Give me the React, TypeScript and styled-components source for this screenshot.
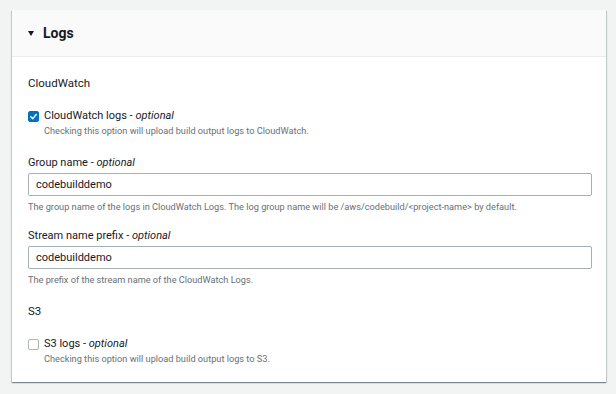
import React from 'react';
import styled, { createGlobalStyle } from 'styled-components';

const GlobalStyle = createGlobalStyle`
  html, body {
    margin: 0;
    padding: 0;
    background: #f2f3f3;
  }
  body {
    font-family: Roboto, "Liberation Sans", Arial, sans-serif;
    color: #16191f;
  }
`;

const Page = styled.div`
  padding: 10px 10px 12px 12px;
`;

const Card = styled.section`
  width: 594px;
  background: #ffffff;
  box-shadow: 0 1px 1px 0 rgba(0, 28, 36, 0.3), 1px 1px 1px 0 rgba(0, 28, 36, 0.15),
    -1px 1px 1px 0 rgba(0, 28, 36, 0.15);
`;

const Header = styled.div`
  height: 47px;
  box-sizing: border-box;
  display: flex;
  align-items: center;
  gap: 9px;
  padding: 0 16px;
  background: #fafafa;
  border-bottom: 1px solid #eaeded;
`;

const Caret = styled.span`
  width: 0;
  height: 0;
  border-left: 3.5px solid transparent;
  border-right: 3.5px solid transparent;
  border-top: 5px solid #16191f;
  margin-top: 1px;
`;

const HeaderTitle = styled.h2`
  margin: 0;
  font-size: 14px;
  font-weight: 700;
  line-height: 18px;
`;

const Body = styled.div`
  display: flex;
  flex-direction: column;
  padding: 17px 14px 17px 16px;
`;

const SectionTitle = styled.h3<{ $mt?: number }>`
  margin: ${({ $mt }) => $mt ?? 0}px 0 0;
  font-size: 11.5px;
  font-weight: 400;
  line-height: 18px;
`;

const CheckRow = styled.div`
  display: flex;
  align-items: flex-start;
  gap: 5px;
  margin-top: 16px;
`;

const Box = styled.span<{ $checked: boolean }>`
  flex: none;
  width: 11px;
  height: 11px;
  margin-top: 2.5px;
  box-sizing: border-box;
  border-radius: 2px;
  display: flex;
  align-items: center;
  justify-content: center;
  background: ${({ $checked }) => ($checked ? '#0073bb' : '#ffffff')};
  border: 1px solid ${({ $checked }) => ($checked ? '#0073bb' : '#aab7b8')};
`;

const CheckText = styled.div`
  display: flex;
  flex-direction: column;
`;

const Label = styled.div`
  font-size: 11px;
  line-height: 16px;
  color: #16191f;

  em {
    font-style: italic;
  }
`;

const Description = styled.div<{ $mt?: number }>`
  margin-top: ${({ $mt }) => $mt ?? 0}px;
  font-size: 9.2px;
  line-height: 13px;
  color: #687078;
`;

const Field = styled.div<{ $mt: number }>`
  display: flex;
  flex-direction: column;
  margin-top: ${({ $mt }) => $mt}px;
`;

const FieldLabel = styled(Label)`
  line-height: 14px;
`;

const Input = styled.div`
  margin-top: 3px;
  height: 23px;
  box-sizing: border-box;
  border: 1px solid #a4b0b1;
  border-radius: 2px;
  padding: 0 7px;
  display: flex;
  align-items: center;
  font-size: 11px;
  color: #16191f;
`;

const Check = ({ checked }: { checked: boolean }) => (
  <Box $checked={checked}>
    {checked && (
      <svg width="9" height="9" viewBox="0 0 10 10">
        <path d="M2 5.2 L4.2 7.4 L8 2.8" fill="none" stroke="#fff" strokeWidth="1.6" strokeLinecap="round" strokeLinejoin="round" />
      </svg>
    )}
  </Box>
);

const CheckOption = ({ checked, label, hint }: { checked: boolean; label: string; hint: string }) => (
  <CheckRow>
    <Check checked={checked} />
    <CheckText>
      <Label>
        {label} - <em>optional</em>
      </Label>
      <Description>{hint}</Description>
    </CheckText>
  </CheckRow>
);

const TextField = ({ mt, label, value, hint }: { mt: number; label: string; value: string; hint: string }) => (
  <Field $mt={mt}>
    <FieldLabel>
      {label} - <em>optional</em>
    </FieldLabel>
    <Input>{value}</Input>
    <Description $mt={4}>{hint}</Description>
  </Field>
);

export default function App() {
  return (
    <Page>
      <GlobalStyle />
      <Card>
        <Header>
          <Caret />
          <HeaderTitle>Logs</HeaderTitle>
        </Header>
        <Body>
          <SectionTitle>CloudWatch</SectionTitle>
          <CheckOption
            checked
            label="CloudWatch logs"
            hint="Checking this option will upload build output logs to CloudWatch."
          />
          <TextField
            mt={19}
            label="Group name"
            value="codebuilddemo"
            hint="The group name of the logs in CloudWatch Logs. The log group name will be /aws/codebuild/<project-name> by default."
          />
          <TextField
            mt={16}
            label="Stream name prefix"
            value="codebuilddemo"
            hint="The prefix of the stream name of the CloudWatch Logs."
          />
          <SectionTitle $mt={16}>S3</SectionTitle>
          <CheckOption
            checked={false}
            label="S3 logs"
            hint="Checking this option will upload build output logs to S3."
          />
        </Body>
      </Card>
    </Page>
  );
}
